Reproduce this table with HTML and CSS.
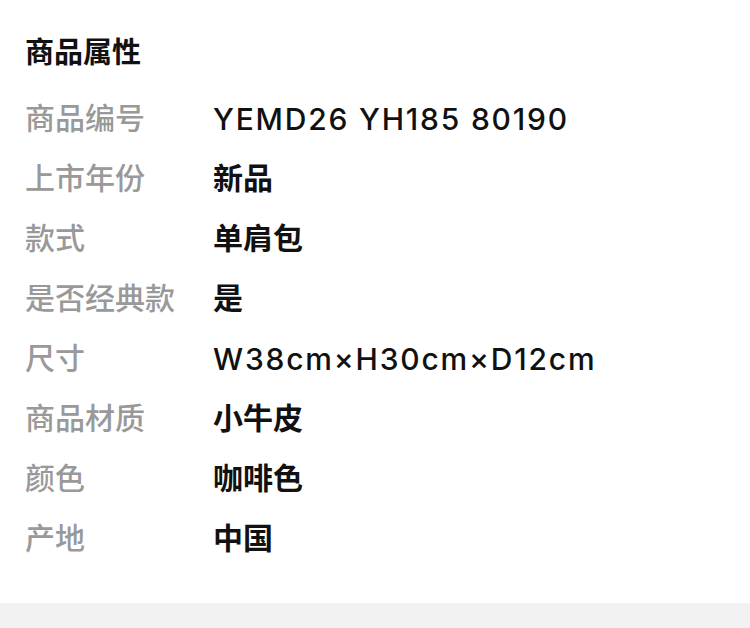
FILE: index.html
```html
<!DOCTYPE html>
<html>
<head>
  <meta charset="utf-8">
  <title>商品属性</title>
  <link rel="stylesheet" href="styles.css">
</head>
<body>
  <div class="panel">
    <h2 class="panel-title">商品属性</h2>
    <div class="attr-list">
      <div class="attr-row"><span class="attr-label">商品编号</span><span class="attr-value latin">YEMD26 YH185 80190</span></div>
      <div class="attr-row"><span class="attr-label">上市年份</span><span class="attr-value">新品</span></div>
      <div class="attr-row"><span class="attr-label">款式</span><span class="attr-value">单肩包</span></div>
      <div class="attr-row"><span class="attr-label">是否经典款</span><span class="attr-value">是</span></div>
      <div class="attr-row"><span class="attr-label">尺寸</span><span class="attr-value latin">W38cm×H30cm×D12cm</span></div>
      <div class="attr-row"><span class="attr-label">商品材质</span><span class="attr-value">小牛皮</span></div>
      <div class="attr-row"><span class="attr-label">颜色</span><span class="attr-value">咖啡色</span></div>
      <div class="attr-row"><span class="attr-label">产地</span><span class="attr-value">中国</span></div>
    </div>
  </div>
  <div class="footer-band"></div>
</body>
</html>
```

FILE: styles.css
```css
body {
  margin: 0;
  background-color: #ffffff;
  font-family: "Noto Sans CJK SC", "Noto Sans", sans-serif;
}

.panel {
  padding: 20px 25px 37px;
}

.panel-title {
  margin: 0 0 6px;
  height: 60px;
  line-height: 60px;
  font-size: 29px;
  font-weight: 700;
  color: #111;
}

.attr-row {
  display: flex;
  height: 60px;
  line-height: 60px;
  font-size: 30px;
}

.attr-label {
  width: 188px;
  flex-shrink: 0;
  color: #999999;
  font-weight: 500;
}

.attr-value {
  color: #111;
  font-weight: 700;
}

/* codes and sizes use a wider latin face */
.attr-value.latin {
  font-family: "Inter", "Noto Sans CJK SC", sans-serif;
  font-weight: 500;
  letter-spacing: 1.8px;
  padding-top: 3px;
}

.footer-band {
  height: 25px;
  background-color: #f2f2f2;
}
```
